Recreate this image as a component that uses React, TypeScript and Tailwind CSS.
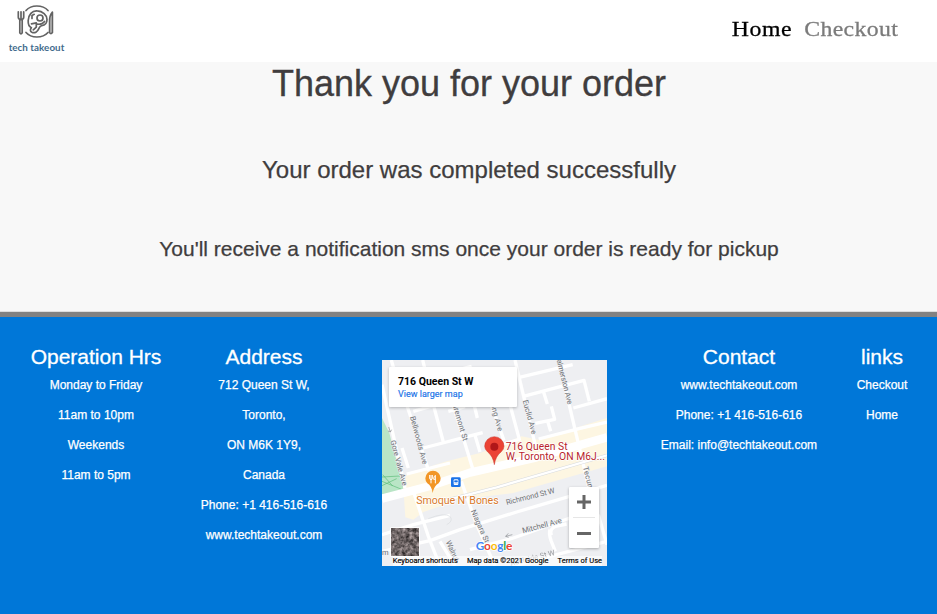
import React from "react";

const sans = "font-['Liberation_Sans',Arial,sans-serif]";

function Logo() {
  return (
    <a href="#" className="flex w-[57px] flex-col items-center pt-[4px]" aria-label="tech takeout">
      <svg width="42" height="34" viewBox="17 4 42 34" fill="none" stroke="#636363" strokeWidth="1.7" strokeLinecap="round" strokeLinejoin="round">
        <path d="M27 10.5Q31 6 37.8 6Q45 6 49 10.5M27 32.5Q31 37 37.8 37Q45 37 49 32.5" />
        <path d="M19.3 11.8v5.4q0 2 2.7 2.4q2.7-.4 2.7-2.4v-5.4M22 11.8v6.5M20.8 20v12.8q1.2 2 2.4 0V20" />
        <path d="M53.4 12.2q-3 3-2.8 10.2v10.2q1.3 2 2.8 0z" fill="#ddd" />
        <path d="M29.2 20.5c.2-6 4-10 9-9.6c5.4 .2 9.8 4 9.8 8.5c0 4.2-2.8 5.8-5.3 6.2c-2 .4-2 1.4-3 3.3c-1.2 2.8-4 4.7-6.8 3.4c-2-1-1.8-3-.5-4.6c-2.3-1-3.4-3.4-3.2-7.2z" />
        <circle cx="41" cy="18" r="3" />
        <path d="M33 18.5v-3l2.2-1.2M32.5 23.8l4.8-1v4.3l-3 2.8M38.8 24.2q4.5.5 6.8-2.7" />
      </svg>
      <span className="mt-[2px] font-['Lato',sans-serif] text-[9.8px] leading-[14px] font-bold whitespace-nowrap tracking-[0.05px] text-[#3f6b8c]">tech takeout</span>
    </a>
  );
}

const minorRoads = [
  "M34 6L52 70", "M128 6L136 38", "M6 80L75 390", "M80 140L100 200L146 338", "M160 140L190 252", "M100 160L160 143", "M210 110L280 338",
  "M130 270L308 224", "M195 45L275 25", "M270 90L292 180", "M205 160L255 146", "M285 232L300 282", "M330 130L372 248",
  "M405 6L466 262", "M390 140L418 244L370 258", "M418 58L578 20", "M430 115L612 67L628 130", "M490 100L502 138", "M514 145L524 184L466 196",
  "M503 190L512 220", "M536 6L610 320L636 430", "M476 243L600 211L681 192", "M580 150L681 122", "M66 270L85 330", "M80 348L210 315",
  "M6 530L100 500L210 472", "M100 400L145 535L180 624", "M6 580L150 548L240 515L410 462L681 382", "M244 370L290 500L345 624",
  "M180 550L225 624", "M270 575L400 540L570 480", "M400 624L681 550", "M510 515Q505 525 514 550L526 580", "M655 470L681 560", "M560 498L530 504Q507 511 514 532",
];

function StreetMap() {
  return (
    <svg className="block h-full w-full" viewBox="6 6 675 618" preserveAspectRatio="none" fontFamily="Roboto, sans-serif">
      <defs>
        <filter id="terrain" x="0" y="0" width="1" height="1" colorInterpolationFilters="sRGB">
          <feTurbulence type="fractalNoise" baseFrequency=".09" numOctaves="3" seed="6" />
          <feColorMatrix values=".8 0 0 0 .03  .75 0 0 0 .02  .75 0 0 0 .02  0 0 0 0 1" />
        </filter>
      </defs>
      <rect x="6" y="6" width="675" height="618" fill="#eeeff2" />
      <path d="M6 180L28 225L72 395L6 410z" fill="#b9e5c6" />
      <path d="M6 357L60 354M6 370L65 394M6 383L50 362M8 350L38 384" stroke="#5cbd78" strokeWidth="2" fill="none" />
      <path d="M80 348L200 310L300 285L425 235L475 245L681 180V325L400 405L230 425L180 445L130 462L100 485L76 478L70 390z" fill="#fdf6e2" />
      <g fill="none" stroke="#fff" strokeWidth="10" strokeLinejoin="round">
        {minorRoads.map((d) => <path key={d} d={d} />)}
        <path d="M6 422L150 384L270 344L470 298L681 238" strokeWidth="25" />
        <path d="M170 434L350 388L681 292" stroke="#d7dadd" strokeWidth="10" />
        <path d="M170 434L350 388L681 292" strokeWidth="7" />
        <path d="M145 482Q195 462 211 476Q220 490 200 500" stroke="#dadcdf" strokeWidth="2" />
      </g>
      <g fontSize="22.5" fill="#6f7276" stroke="#eeeff2" strokeWidth="3" paintOrder="stroke">
        <text transform="translate(31 249) rotate(75)" textLength="140">Gore Vale Ave</text>
        <text transform="translate(90 177) rotate(75)" textLength="148">Bellwoods Ave</text>
        <text transform="translate(216 134) rotate(74)" textLength="121">laremont St</text>
        <text transform="translate(332 138) rotate(75)" textLength="86">ong Ave</text>
        <text transform="translate(428 128) rotate(75)" textLength="105">Euclid Ave</text>
        <text transform="translate(530 7) rotate(76)" textLength="137">almerston Ave</text>
        <text transform="translate(609 328) rotate(76)" textLength="72">Tecum</text>
        <text transform="translate(272 459) rotate(66)" textLength="106">Niagara St</text>
        <text transform="translate(197 552) rotate(65)" textLength="66">Walnut</text>
        <text transform="translate(380 441) rotate(-14)" textLength="150" fontSize="23">Richmond St W</text>
        <text transform="translate(429 526) rotate(-15)" textLength="122" fontSize="23">Mitchell Ave</text>
        <text transform="translate(392 624) rotate(-14)" textLength="138" opacity=".65">Adelaide St W</text>
        <text x="6" y="590">m</text>
      </g>
      <g stroke="#8d9094" strokeWidth="2" fill="none">
        <path d="M26 207L31 222M24 219L31 222L35 215M377 535L397 530M385 526L377 535L386 538" />
      </g>
      <rect x="213" y="358" width="29" height="29" rx="4" fill="#1b73e8" />
      <rect x="221" y="364" width="14" height="17" rx="3" fill="#fff" />
      <path d="M224 368h8v4h-8zM224 376h2M230 376h2" fill="#1b73e8" stroke="#1b73e8" strokeWidth="2" />
      <path d="M158 405Q155 384 142 376Q136 370 136 361A23 23 0 0 1 182 361Q182 370 176 376Q162 384 158 405z" fill="#f29626" />
      <path d="M149 351v9q0 5 4 5t4-5v-9M153 351v25M166 376v-24q-5 3-5 12h5" fill="none" stroke="#fff" strokeWidth="3" />
      <text x="109" y="438" fontSize="32" fill="#d9792b" stroke="#fff" strokeWidth="4" paintOrder="stroke" textLength="247">Smoque N' Bones</text>
      <path d="M343 320Q339 294 323 282Q314 274 314 265A29 29 0 0 1 372 265Q372 274 363 282Q347 294 343 320z" fill="#eb4335" stroke="#c9362c" strokeWidth="1.5" />
      <circle cx="343" cy="266" r="12" fill="#b01719" />
      <g fontSize="31" fill="#b8232b" stroke="#fff" strokeWidth="4" paintOrder="stroke">
        <text x="377" y="275" textLength="186">716 Queen St</text>
        <text x="377" y="307" textLength="298">W, Toronto, ON M6J...</text>
      </g>
      <rect x="31" y="508" width="88" height="88" fill="#fff" />
      <rect x="34" y="511" width="82" height="82" filter="url(#terrain)" />
      <text x="287" y="577" fontSize="36" fontWeight="700" fontFamily="Lato, sans-serif" textLength="110" stroke="#fff" strokeWidth="4" paintOrder="stroke">
        <tspan fill="#4285f4">G</tspan><tspan fill="#ea4335">o</tspan><tspan fill="#fbbc05">o</tspan><tspan fill="#4285f4">g</tspan><tspan fill="#34a853">l</tspan><tspan fill="#ea4335">e</tspan>
      </text>
    </svg>
  );
}

function MapPanel() {
  return (
    <div className="relative mt-[48px] ml-[46px] h-[206px] w-[225px] shrink-0 overflow-hidden font-['Roboto',sans-serif]">
      <StreetMap />
      <div className="absolute top-[7px] left-[7px] h-[40px] w-[128px] rounded-[1px] bg-white pt-[8px] pl-[9px] whitespace-nowrap shadow-[0_1px_3px_rgba(0,0,0,0.25)]">
        <div className="text-[10.5px] leading-[13px] font-bold text-black">716 Queen St W</div>
        <a href="#" className="block text-[9px] leading-[13px] text-[#1a73e8] [-webkit-text-stroke:0.15px_#1a73e8]">View larger map</a>
      </div>
      <div className="absolute top-[127px] left-[187px] flex h-[61px] w-[30px] flex-col items-center rounded-[1px] bg-white shadow-[0_1px_3px_rgba(0,0,0,0.3)]">
        <button className="flex h-[30px] w-full items-center justify-center" aria-label="Zoom in">
          <svg width="14" height="14"><path d="M0 7h14M7 0v14" stroke="#666" strokeWidth="3" /></svg>
        </button>
        <span className="h-px w-[22px] bg-[#e6e6e6]" />
        <button className="flex h-[30px] w-full items-center justify-center" aria-label="Zoom out">
          <svg width="14" height="3"><path d="M0 1.5h14" stroke="#666" strokeWidth="3" /></svg>
        </button>
      </div>
      <div className="absolute right-[5px] bottom-0 flex h-[10px] items-center gap-[9px] bg-white/60 text-[7.5px] leading-[10px] whitespace-nowrap text-black [-webkit-text-stroke:0.15px_black]">
        <span>Keyboard shortcuts</span>
        <span>Map data ©2021 Google</span>
        <span>Terms of Use</span>
      </div>
    </div>
  );
}

function FooterColumn({ title, lines, className }: { title: string; lines: string[]; className: string }) {
  return (
    <section className={`shrink-0 pt-[32px] text-center text-white ${className}`}>
      <h4 className="text-[21px] leading-[26px] [-webkit-text-stroke:0.3px_white]">{title}</h4>
      <ul className="text-[12px] leading-[30px] [-webkit-text-stroke:0.25px_white]">
        {lines.map((line) => <li key={line}>{line}</li>)}
      </ul>
    </section>
  );
}

export default function App() {
  return (
    <div className={`flex h-[614px] w-full flex-col overflow-hidden bg-[#f8f8f8] ${sans}`}>
      <header className="flex h-[62px] shrink-0 items-start justify-between bg-white pr-[39px] pl-[8px]">
        <Logo />
        <nav className="flex origin-right scale-x-[1.08] gap-[11px] pt-[14px] font-['Liberation_Serif',serif] text-[22px] leading-[30px] tracking-[0.35px]">
          <a href="#" className="tracking-[0.6px] text-black [-webkit-text-stroke:0.3px_black]">Home</a>
          <a href="#" className="text-[#7b7b7b] [-webkit-text-stroke:0.3px_#7b7b7b]">Checkout</a>
        </nav>
      </header>
      <main className="h-[249px] shrink-0 pl-px text-center text-[#403d3e]">
        <h1 className="text-[36px] leading-[44px] [-webkit-text-stroke:0.3px_#403d3e]">Thank you for your order</h1>
        <h2 className="mt-[49px] text-[24px] leading-[30px] [-webkit-text-stroke:0.25px_#403d3e]">Your order was completed successfully</h2>
        <h3 className="mt-[51px] text-[21px] leading-[26px] [-webkit-text-stroke:0.25px_#403d3e]">You'll receive a notification sms once your order is ready for pickup</h3>
      </main>
      <footer className="flex grow items-start border-t border-[#dedede] bg-[#0077d8] shadow-[inset_0_5px_0_#828282]">
        <FooterColumn className="w-[192px]" title="Operation Hrs" lines={["Monday to Friday", "11am to 10pm", "Weekends", "11am to 5pm"]} />
        <FooterColumn className="w-[144px]" title="Address" lines={["712 Queen St W,", "Toronto,", "ON M6K 1Y9,", "Canada", "Phone: +1 416-516-616", "www.techtakeout.com"]} />
        <MapPanel />
        <FooterColumn className="ml-[43px] w-[178px]" title="Contact" lines={["www.techtakeout.com", "Phone: +1 416-516-616", "Email: info@techtakeout.com"]} />
        <FooterColumn className="w-[108px]" title="links" lines={["Checkout", "Home"]} />
      </footer>
    </div>
  );
}
